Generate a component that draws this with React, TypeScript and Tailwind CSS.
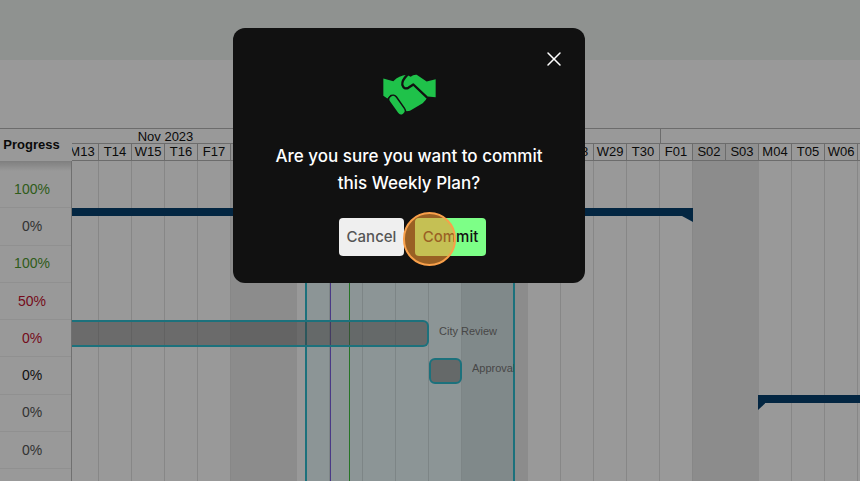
import React from 'react'
import { X } from 'lucide-react'

const days = ['M13', 'T14', 'W15', 'T16', 'F17', 'S18', 'S19', 'M20', 'T21', 'W22', 'T23', 'F24', 'S25', 'S26', 'M27', 'T28', 'W29', 'T30', 'F01', 'S02', 'S03', 'M04', 'T05', 'W06', 'T07']

const rows = [
  { label: '100%', color: 'text-[#4f9a2e]' },
  { label: '0%', color: 'text-[#555555]' },
  { label: '100%', color: 'text-[#4f9a2e]' },
  { label: '50%', color: 'text-[#c41230]' },
  { label: '0%', color: 'text-[#c41230]' },
  { label: '0%', color: 'text-[#1a1a1a]' },
  { label: '0%', color: 'text-[#555555]' },
  { label: '0%', color: 'text-[#555555]' },
]

function HandshakeIcon() {
  return (
    <svg className="ml-[1px] mt-[43px] h-[47px] w-[60px] shrink-0" viewBox="440 130 180 140" fill="none">
      <path
        d="M450 152 L480 160 Q497 143 520 141 L532 147 Q540 140 550 141 L580 161 L607 154 L607 208 L583 206 Q578 218 568 226 L530 249 L520 250 L500 225 L473 200 L462 212 L450 204 Z"
        fill="#1fc24a"
      />
      <path d="M522 141 Q505 158 507 171 Q512 186 525 180 L540 170 L580 208" stroke="#111111" strokeWidth="7" strokeLinecap="round" strokeLinejoin="round" />
      <path d="M479 215 L503 249" stroke="#111111" strokeWidth="30" strokeLinecap="round" />
      <path d="M479 215 L503 249" stroke="#1fc24a" strokeWidth="21" strokeLinecap="round" />
    </svg>
  )
}

function Gantt() {
  return (
    <div className="flex flex-1 flex-col overflow-hidden">
      {/* month row */}
      <div className="ml-[-6px] flex h-[14px] w-[900px] shrink-0 text-[13px] leading-[15px] text-[#111]">
        <div className="w-[595px] shrink-0 border-r border-[#b5b5b5]">
          <div className="w-[199px] text-center">Nov 2023</div>
        </div>
      </div>
      {/* day row */}
      <div className="ml-[-6px] flex h-[18px] w-[900px] shrink-0 border-y border-[#b5b5b5]">
        {days.map((d, i) => (
          <div
            key={i}
            className={`flex w-[33px] shrink-0 items-center justify-center border-r border-[#b5b5b5] text-[13px] text-[#111] ${d[0] === 'S' ? 'bg-[#f0f0f0]' : ''}`}
          >
            {d}
          </div>
        ))}
      </div>
      {/* chart */}
      <div className="relative flex-1">
        <div className="absolute inset-0 ml-[-6px] flex w-[900px]">
          {days.map((d, i) => (
            <div key={i} className={`w-[33px] shrink-0 border-r ${d[0] === 'S' ? 'border-[#e9e9e9] bg-[#e9e9e9]' : 'border-[#e2e2e2]'}`} />
          ))}
        </div>

        {/* sprint window */}
        <div className="absolute left-[233px] top-0 h-full w-[210px] border-x-2 border-[#2fbccf] bg-[#2fbccf]/10" />
        <div className="absolute left-[258px] top-0 h-full w-px bg-[#7a60e0]" />
        <div className="absolute left-[277px] top-0 h-full w-px bg-[#3fc03f]" />

        {/* summary bars */}
        <div className="absolute left-0 top-[47px] h-2 w-[621px] bg-[#05406f]" />
        <div className="absolute left-[610px] top-[47px] h-[14px] w-[11px] bg-[#05406f] [clip-path:polygon(0_0,100%_0,100%_100%,0_57%)]" />
        <div className="absolute left-[686px] top-[234px] h-2 w-[120px] bg-[#05406f]" />
        <div className="absolute left-[686px] top-[234px] h-[15px] w-[7px] bg-[#05406f] [clip-path:polygon(0_0,100%_0,100%_57%,0_100%)]" />

        {/* tasks */}
        <div className="absolute left-0 top-[159px] h-[27px] w-[357px] rounded-r-[6px] border-y-[2px] border-r-[2px] border-[#2fbccf] bg-[#666666]/50" />
        <span className="absolute left-[367px] top-[163px] text-[11px] leading-[14px] text-[#777777]">City Review</span>
        <div className="absolute left-[357px] top-[197px] h-[26px] w-[33px] rounded-[6px] border-2 border-[#2fbccf] bg-[#666666]/50" />
        <div className="absolute left-[400px] top-[200px] w-[42px] overflow-hidden text-[11px] leading-[14px] text-[#777777]">Approval</div>
      </div>
    </div>
  )
}

export default function App() {
  return (
    <div className="relative flex h-[481px] w-[860px] flex-col overflow-hidden bg-white font-['Liberation_Sans',sans-serif]">
      <div className="h-[60px] shrink-0 bg-[#eff3f1]" />
      <div className="h-[69px] shrink-0 border-b border-[#b5b5b5]" />

      <div className="flex flex-1 overflow-hidden">
        {/* progress column */}
        <div className="flex w-[72px] shrink-0 flex-col">
          <div className="flex h-[32px] shrink-0 items-center justify-center pr-[9px] text-[13px] font-bold text-[#111]">Progress</div>
          <div className="flex-1 border-r border-[#bbbbbb]">
            <div className="h-[10px] bg-gradient-to-b from-[#d4d4d4] to-white" />
            {rows.map((r, i) => (
              <div key={i} className={`flex h-[37.3px] items-center justify-center border-b border-[#f0f0f0] pr-[7px] text-[14px] ${r.color}`}>
                {r.label}
              </div>
            ))}
          </div>
        </div>
        <Gantt />
      </div>

      {/* dim */}
      <div className="absolute inset-0 bg-black/40" />

      {/* confirm dialog */}
      <div className="absolute left-[233px] top-[28px] flex h-[255px] w-[352px] flex-col items-center rounded-xl bg-[#111111] font-['Inter',sans-serif]">
        <button className="absolute right-[19px] top-[19px] text-white">
          <X size={24} strokeWidth={1.5} />
        </button>
        <HandshakeIcon />
        <p className="mt-[25px] w-[300px] text-center text-[17px] font-medium leading-[27px] text-white">
          Are you sure you want to commit this Weekly Plan?
        </p>
        <div className="ml-[7px] mt-[21px] flex gap-[11px]">
          <button className="h-[38px] w-[65px] rounded bg-[#efefef] pt-px text-[15px] font-medium text-[#555555]">Cancel</button>
          <button className="h-[38px] w-[71px] rounded bg-[#7dff87] pt-px text-[15px] font-medium text-[#111111]">Commit</button>
        </div>
      </div>

      {/* click marker */}
      <div className="absolute left-[403px] top-[212px] h-[54px] w-[53px] rounded-full border-2 border-[#f9a04a] bg-[#f59632]/60" />
    </div>
  )
}
